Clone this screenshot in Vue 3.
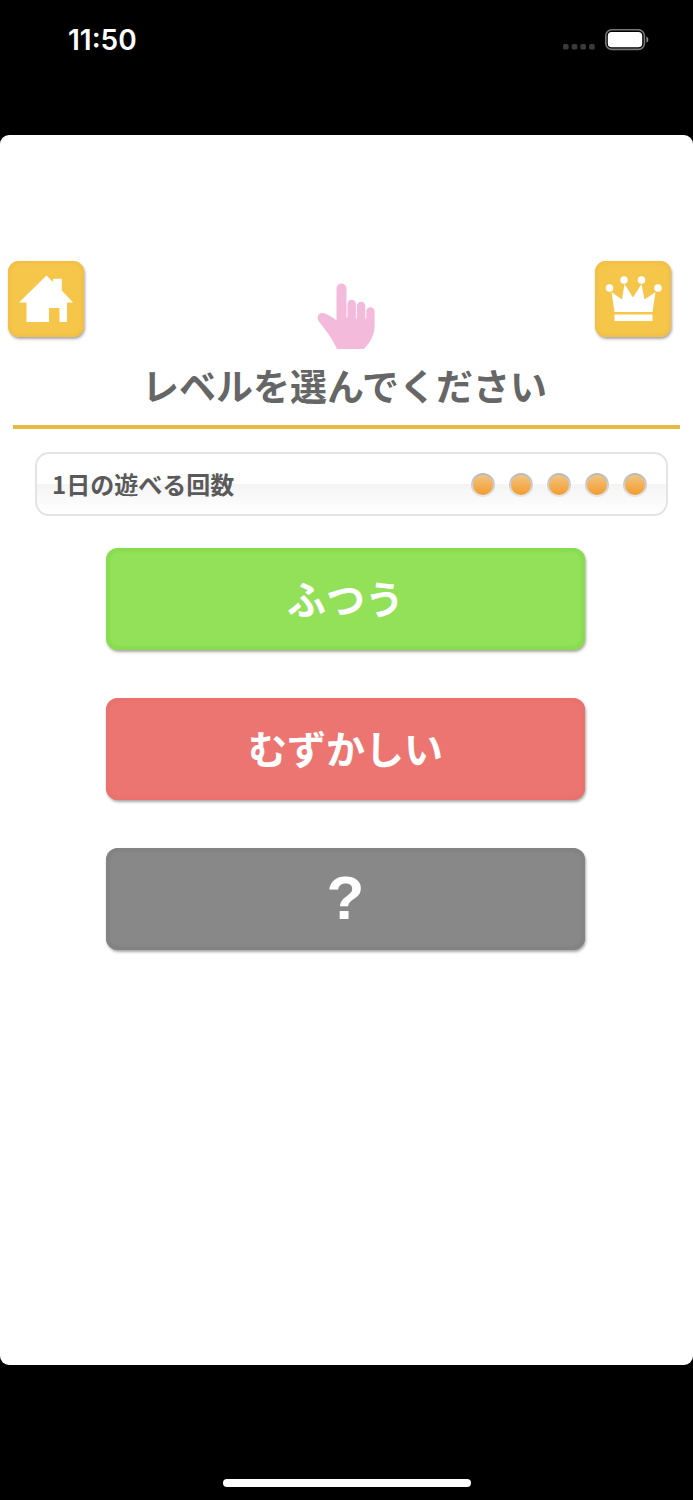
<template>
  <div class="screen">
    <div class="status-bar">
      <span class="time">11:50</span>
      <div class="status-icons">
        <svg class="signal" width="32" height="6" viewBox="0 0 32 6" aria-hidden="true">
          <rect v-for="n in 4" :key="n" :x="(n - 1) * 8.7" y="0" width="5.6" height="5.6" rx="1.6" fill="#3a3a3a" />
        </svg>
        <svg class="battery" width="44" height="22" viewBox="0 0 44 22" aria-hidden="true">
          <rect x="0.8" y="0.8" width="38.6" height="19.6" rx="6" fill="none" stroke="#777" stroke-width="1.6" />
          <rect x="2.8" y="3" width="34.4" height="15.2" rx="3.8" fill="#fff" />
          <path d="M41.4 7.4c2.6 1.4 2.6 5 0 6.4z" fill="#888" />
        </svg>
      </div>
    </div>

    <main class="page">
      <header class="header">
        <button type="button" class="icon-button" aria-label="ホーム">
          <svg width="76" height="76" viewBox="0 0 76 76" aria-hidden="true">
            <path d="M38.5 14.5L45 21V17.8H53.800V29.500L65 41.500H59V61H51.500V47H41V61H18.500V41.500H11z" fill="#fff" />
          </svg>
        </button>
        <svg class="hand" width="58" height="66" viewBox="0 0 58 66" aria-hidden="true">
          <path
            d="M19.500 37.500V5.500a5 5 0 0 1 10 0V34.500h1V21a4.200 4.200 0 0 1 8.400 0V35.500h1V23a4.200 4.200 0 0 1 8.400 0V35.500h1V28.500a4 4 0 0 1 8.300 0V43c0 9-4.500 16.500-10.600 23H20C15.500 55.500 8 46.500 2 38.500C-1.500 33.500 2 29 7 30.200C11 31.200 16 34.500 19.500 37.500z"
            fill="#f4badb"
          />
        </svg>
        <button type="button" class="icon-button" aria-label="ランキング">
          <svg width="76" height="76" viewBox="0 0 76 76" aria-hidden="true">
            <g fill="#fff">
              <circle cx="14.500" cy="27" r="3.800" />
              <circle cx="29" cy="19" r="3.800" />
              <circle cx="46.500" cy="19" r="3.800" />
              <circle cx="63" cy="27" r="3.800" />
              <path d="M16.500 31L27 38.500L29.500 23L38 36.500L46.500 23L49.500 38.500L60.500 31L57.500 51H19.500z" />
              <path d="M19.500 53.500H57.500V60H19.500z" />
            </g>
          </svg>
        </button>
      </header>

      <h1 class="title">レベルを選んでください</h1>

      <div class="plays">
        <span class="plays-label">1日の遊べる回数</span>
        <div class="dots">
          <span v-for="n in remaining" :key="n" class="dot"></span>
        </div>
      </div>

      <div class="levels">
        <button
          v-for="level in levels"
          :key="level.name"
          type="button"
          class="level"
          :class="level.name"
        >
          {{ level.label }}
        </button>
      </div>
    </main>

    <div class="bottom-bar">
      <div class="home-indicator"></div>
    </div>
  </div>
</template>

<script setup>
import { ref } from 'vue';

const remaining = ref(5);

const levels = [
  { name: 'normal', label: 'ふつう' },
  { name: 'hard', label: 'むずかしい' },
  { name: 'secret', label: '?' }
];
</script>

<style>
body {
  margin: 0;
  background: #000;
}
</style>

<style scoped>
.screen {
  display: flex;
  flex-direction: column;
  min-height: 100vh;
  background: #000;
  font-family: "Noto Sans CJK JP", sans-serif;
}

.status-bar {
  display: flex;
  justify-content: space-between;
  align-items: flex-start;
  box-sizing: border-box;
  height: 135px;
  padding: 24px 44px 0 68px;
}

.time {
  color: #fff;
  font-family: Inter, sans-serif;
  font-size: 28px;
  font-weight: 600;
  line-height: 32px;
}

.status-icons {
  display: flex;
  align-items: flex-end;
  gap: 10px;
  padding-top: 5px;
}

.signal {
  margin-bottom: 1px;
}

.page {
  flex: 1;
  background: #fff;
  border-radius: 9px;
}

.header {
  display: flex;
  justify-content: space-between;
  align-items: flex-start;
  padding: 126px 22px 0 8px;
}

.icon-button {
  width: 76px;
  height: 76px;
  padding: 0;
  border: 0;
  border-radius: 11px;
  background: #f6c64a;
  box-shadow: inset 0 0 3px 3px #f2c047, 1px 2px 3px rgba(0, 0, 0, 0.35);
  cursor: pointer;
}

.icon-button svg {
  display: block;
}

.hand {
  margin-top: 22px;
  margin-left: 12px;
}

.title {
  margin: 8px 13px 0;
  padding: 2px 4px 14px 0;
  border-bottom: 4px solid #e9ba42;
  color: #666;
  font-size: 37px;
  font-weight: 700;
  line-height: 52px;
  text-align: center;
}

.plays {
  display: flex;
  justify-content: space-between;
  align-items: center;
  box-sizing: border-box;
  height: 64px;
  margin: 23px 25px 0 35px;
  padding: 0 19px 0 15px;
  border: 2px solid #e4e4e4;
  border-radius: 14px;
  background: linear-gradient(#fff 50%, #f4f4f4 50%, #fff);
}

.plays-label {
  color: #5a5a5a;
  font-size: 24px;
  font-weight: 700;
  line-height: 32px;
}

.dots {
  display: flex;
  gap: 14px;
  padding-top: 2px;
}

.dot {
  box-sizing: border-box;
  width: 24px;
  height: 24px;
  border: 2px solid transparent;
  border-radius: 50%;
  background: linear-gradient(#f2c481, #f39c2c) padding-box, linear-gradient(#b8b8b8, #e8e8e8) border-box;
}

.levels {
  display: flex;
  flex-direction: column;
  gap: 48px;
  margin: 32px 108px 0 106px;
}

.level {
  height: 102px;
  padding: 0 0 4px;
  border: 0;
  border-radius: 12px;
  color: #fff;
  font-family: "Noto Sans CJK JP", sans-serif;
  font-size: 39px;
  font-weight: 700;
  cursor: pointer;
}

.normal {
  background: #92e159;
  box-shadow: inset 0 0 2px 4px #89dc50, 1px 2px 3px rgba(0, 0, 0, 0.35);
}

.hard {
  background: #ec7571;
  box-shadow: inset 0 0 2px 4px #ea716e, 1px 2px 3px rgba(0, 0, 0, 0.35);
}

.secret {
  background: #888;
  box-shadow: inset 0 0 2px 4px #838383, 1px 2px 3px rgba(0, 0, 0, 0.35);
  font-family: "Liberation Sans", sans-serif;
  font-size: 62px;
}

.bottom-bar {
  display: flex;
  justify-content: center;
  align-items: flex-end;
  box-sizing: border-box;
  height: 135px;
  padding-bottom: 13px;
}

.home-indicator {
  width: 248px;
  height: 8px;
  border-radius: 4px;
  background: #fff;
}
</style>
